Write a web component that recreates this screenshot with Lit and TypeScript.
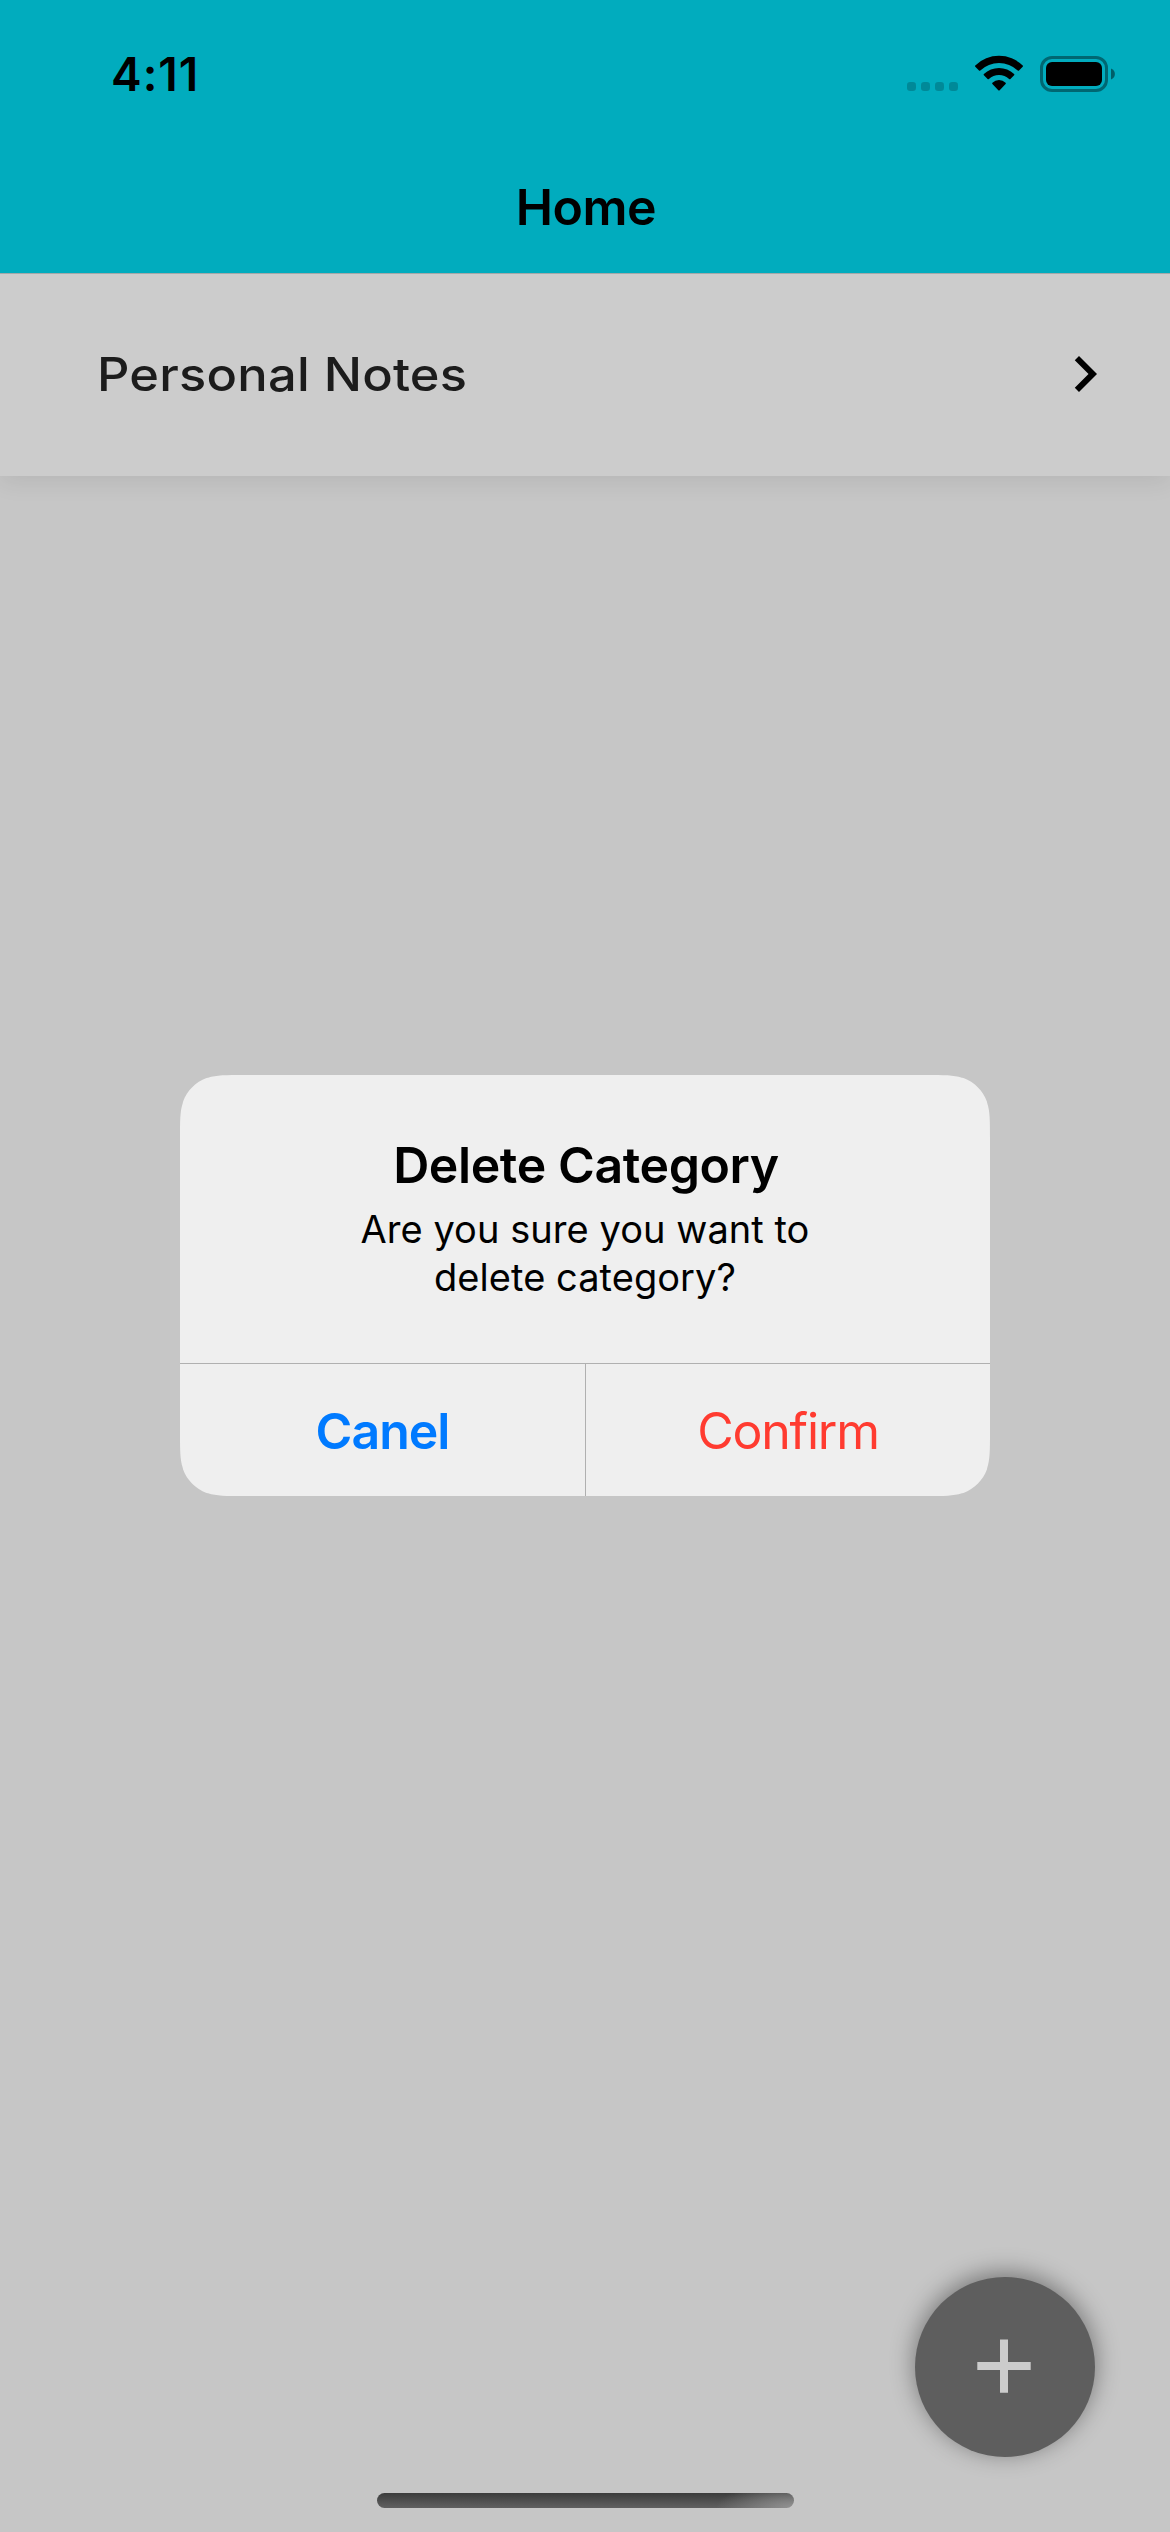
import { LitElement, html, css, svg } from "lit";
import { customElement, property } from "lit/decorators.js";

@customElement("status-bar")
class StatusBar extends LitElement {
  static styles = css`
    :host {
      display: flex;
      justify-content: space-between;
      align-items: flex-start;
      height: 141px;
      padding: 0 54px 0 111px;
      box-sizing: border-box;
    }
    .time {
      margin-top: 46px;
      font-size: 46px;
      line-height: 56px;
      font-weight: 600;
      letter-spacing: 1px;
    }
    .icons {
      display: block;
      margin-top: 54px;
    }
  `;
  render() {
    return html`
      <span class="time">4:11</span>
      <svg class="icons" width="210" height="40" viewBox="906 54 210 40">
        ${[907, 921, 935, 949].map(
          (x) => svg`<rect x=${x} y="82" width="9" height="9" rx="3.2" fill="#000" fill-opacity=".2"/>`
        )}
        <path d="M975.3 65.4Q974.6 66 975.3 66.7L979 70.4Q979.6 71 980.3 70.4A27.4 27.4 0 0 1 1017.7 70.4Q1018.4 71 1019 70.4L1022.7 66.7Q1023.4 66 1022.7 65.4A34.2 34.2 0 0 0 975.3 65.4Z"/>
        <path d="M983.9 74Q983.2 74.7 983.9 75.3L987.6 79Q988.2 79.6 988.9 79A15 15 0 0 1 1009.1 79Q1009.8 79.6 1010.4 79L1014.1 75.3Q1014.8 74.7 1014.1 74A22 22 0 0 0 983.9 74Z"/>
        <path d="M992.4 82.7Q991.8 83.3 992.4 83.9L998.3 90.2Q999 90.9 999.7 90.2L1005.6 83.9Q1006.2 83.3 1005.6 82.7A9.7 9.7 0 0 0 992.4 82.7Z"/>
        <rect x="1041.5" y="57.5" width="65" height="33" rx="10.5" fill="none" stroke="#000" stroke-opacity=".4" stroke-width="3"/>
        <rect x="1046" y="62" width="56" height="24" rx="6"/>
        <path d="M1111 68.6C1116.2 70.6 1116.2 77.4 1111 79.4Z" fill-opacity=".45"/>
      </svg>
    `;
  }
}

@customElement("category-row")
class CategoryRow extends LitElement {
  @property() label = "";
  static styles = css`
    :host {
      display: flex;
      align-items: center;
      justify-content: space-between;
      height: 202px;
      padding: 0 49px 2px 97px;
      box-sizing: border-box;
      background: #cccccc;
      color: #1c1c1c;
      box-shadow: 0 6px 22px rgba(0, 0, 0, 0.08);
    }
    .label {
      font-size: 46px;
      line-height: 56px;
      font-weight: 450;
      letter-spacing: 0.2px;
      transform: scaleX(1.1);
      transform-origin: left;
      white-space: nowrap;
    }
    .chevron {
      display: block;
    }
  `;
  render() {
    return html`
      <span class="label">${this.label}</span>
      <svg class="chevron" width="72" height="72" viewBox="0 0 24 24">
        <path d="M8.59 16.59L13.17 12 8.59 7.41 10 6l6 6-6 6z" fill="#000" />
      </svg>
    `;
  }
}

@customElement("alert-dialog")
class AlertDialog extends LitElement {
  static styles = css`
    :host {
      display: block;
      width: 810px;
      height: 421px;
      background: #efefef;
      color: #000;
      text-align: center;
      clip-path: path(
        "M0 64.2C0 45.7 0 36.5 2.8 28.1L3.1 26.5C7.1 15.7 15.7 7.1 26.5 3.1L28.1 2.8C36.5 0 45.7 0 64.2 0H745.8C764.3 0 773.5 0 781.9 2.8L783.5 3.1C794.3 7.1 802.9 15.7 806.9 26.5L807.2 28.1C810 36.5 810 45.7 810 64.2V356.8C810 375.3 810 384.5 807.2 392.9L806.9 394.5C802.9 405.3 794.3 413.9 783.5 417.9L781.9 418.2C773.5 421 764.3 421 745.8 421H64.2C45.7 421 36.5 421 28.1 418.2L26.5 417.9C15.7 413.9 7.1 405.3 3.1 394.5L2.8 392.9C0 384.5 0 375.3 0 356.8Z"
      );
    }
    .body {
      height: 288px;
      padding-top: 60px;
      box-sizing: border-box;
    }
    .title {
      font-size: 50px;
      line-height: 60px;
      font-weight: 600;
      letter-spacing: -0.4px;
      padding-left: 2px;
    }
    .message {
      margin-top: 10px;
      font-size: 38px;
      line-height: 48px;
      letter-spacing: 0.05px;
    }
    .actions {
      display: grid;
      grid-template-columns: 405px 1fr;
      height: 133px;
      box-sizing: border-box;
      border-top: 1px solid #b0b0b0;
    }
    .action {
      padding-top: 37px;
      font-size: 50px;
      line-height: 60px;
    }
    .cancel {
      color: #007aff;
      font-weight: 600;
      letter-spacing: -1px;
    }
    .confirm {
      color: #ff3b30;
      letter-spacing: -1.2px;
      border-left: 1px solid #b0b0b0;
    }
  `;
  render() {
    return html`
      <div class="body">
        <div class="title">Delete Category</div>
        <div class="message">Are you sure you want to<br />delete category?</div>
      </div>
      <div class="actions">
        <div class="action cancel">Canel</div>
        <div class="action confirm">Confirm</div>
      </div>
    `;
  }
}

@customElement("app-root")
class AppRoot extends LitElement {
  static styles = css`
    :host {
      display: flex;
      flex-direction: column;
      position: relative;
      width: 1170px;
      height: 2532px;
      overflow: hidden;
      background: #c6c6c6;
      color: #000;
      font-family: "Inter", "Liberation Sans", sans-serif;
    }
    .header {
      position: relative;
      z-index: 1;
      height: 274px;
      box-sizing: border-box;
      background: #01acbe;
      border-bottom: 1px solid #a3a9aa;
    }
    .heading {
      padding: 36px 0 0 2px;
      text-align: center;
      font-size: 50px;
      line-height: 60px;
      font-weight: 600;
      letter-spacing: -0.5px;
    }
    .dialog {
      position: absolute;
      left: 180px;
      top: 1075px;
    }
    .fab {
      position: absolute;
      left: 915px;
      top: 2277px;
      width: 180px;
      height: 180px;
      border-radius: 50%;
      background: #5e5e5e;
      box-shadow: 0 -4px 24px rgba(0, 0, 0, 0.42);
    }
    .indicator {
      position: absolute;
      left: 377px;
      top: 2493px;
      width: 417px;
      height: 15px;
      border-radius: 7.5px;
      background:
        radial-gradient(ellipse 78px 26px at 100% 100%, rgba(150, 150, 150, 0.95), rgba(150, 150, 150, 0)),
        linear-gradient(#3c3c3c, #606060);
    }
  `;
  render() {
    return html`
      <div class="header">
        <status-bar></status-bar>
        <div class="heading">Home</div>
      </div>
      <category-row label="Personal Notes"></category-row>
      <alert-dialog class="dialog"></alert-dialog>
      <svg class="fab" viewBox="0 0 180 180">
        <path d="M85 62.5h8v22.5h22.7v8H93v22.7h-8V93H62.3v-8H85z" fill="#cccccc" />
      </svg>
      <div class="indicator"></div>
    `;
  }
}
